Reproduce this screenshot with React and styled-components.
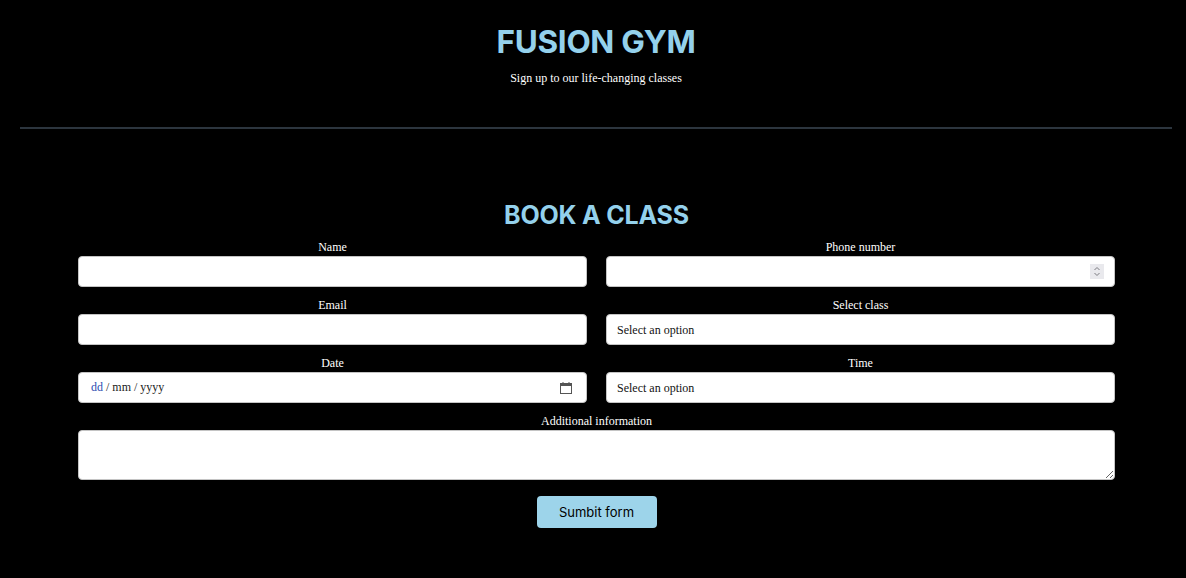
import styled, { createGlobalStyle } from 'styled-components';

const GlobalStyle = createGlobalStyle`
  body {
    margin: 0;
    background: #000;
    color: #fff;
    font-family: "Liberation Serif", "DejaVu Serif", serif;
  }
`;

const Page = styled.div`
  min-height: 578px;
  padding: 0 14px 0 20px;
`;

const Header = styled.header`
  display: flex;
  flex-direction: column;
  align-items: center;
  padding: 23px 0 41px;
  border-bottom: 2px solid #2c353e;
`;

const Title = styled.h1`
  margin: 0;
  font-family: Inter, "Liberation Sans", sans-serif;
  font-weight: 700;
  font-size: 31.5px;
  letter-spacing: -0.3px;
  line-height: 38px;
  color: #94d1ec;
`;

const Subtitle = styled.p`
  margin: 9px 0 0;
  font-size: 12px;
  line-height: 16px;
`;

const Section = styled.section`
  padding: 71px 57px 0 58px;
  display: flex;
  flex-direction: column;
  align-items: center;
`;

const SectionTitle = styled.h2`
  margin: 0;
  font-family: Inter, "Liberation Sans", sans-serif;
  font-weight: 700;
  font-size: 25px;
  letter-spacing: -0.2px;
  line-height: 30px;
  color: #94d1ec;
`;

const Form = styled.form`
  width: 100%;
  display: grid;
  grid-template-columns: 1fr 1fr;
  column-gap: 19px;
  row-gap: 10px;
  margin-top: 9px;
`;

const Field = styled.label`
  display: flex;
  flex-direction: column;
  align-items: stretch;
  grid-column: ${({ $wide }) => ($wide ? '1 / -1' : 'auto')};
`;

const Label = styled.span`
  text-align: center;
  font-size: 12px;
  line-height: 16px;
  margin-bottom: 1px;
`;

const controlStyle = `
  box-sizing: border-box;
  width: 100%;
  height: 31px;
  border: 1px solid #c4c4c4;
  border-radius: 4px;
  background: #fff;
  color: #111;
  padding: 0 10px;
  font-family: "Liberation Serif", "DejaVu Serif", serif;
  font-size: 12px;
  outline: none;
`;

const Input = styled.input`
  ${controlStyle}
`;

const Select = styled.select`
  ${controlStyle}
  appearance: none;
  -webkit-appearance: none;
`;

const Box = styled.div`
  ${controlStyle}
  display: flex;
  align-items: center;
  gap: 8px;
  padding: ${({ $pad }) => $pad || '0 10px'};
`;

const BareInput = styled.input`
  flex: 1;
  min-width: 0;
  height: 100%;
  border: none;
  outline: none;
  background: transparent;
  padding: 0;
  font: inherit;
  color: inherit;
  -moz-appearance: textfield;

  &::-webkit-inner-spin-button,
  &::-webkit-outer-spin-button {
    -webkit-appearance: none;
    margin: 0;
  }
`;

const DateText = styled.span`
  flex: 1;
  color: #222;
`;

const Segment = styled.span`
  color: ${({ $active }) => ($active ? '#2a4cb0' : '#222')};
`;

const TextArea = styled.textarea`
  ${controlStyle}
  height: 50px;
  padding: 6px 10px;
  resize: both;
`;

const Actions = styled.div`
  grid-column: 1 / -1;
  display: flex;
  justify-content: center;
  margin-top: 6px;
`;

const Button = styled.button`
  width: 120px;
  height: 32px;
  border: none;
  border-radius: 4px;
  background: #9dd4ea;
  color: #000;
  font-family: Inter, "Liberation Sans", sans-serif;
  font-size: 13px;
  cursor: pointer;
`;

const Spinner = () => (
  <svg width="14" height="15" viewBox="0 0 14 15">
    <rect width="14" height="15" fill="#e9e9ed" />
    <path d="M4.5 6 L7 3.5 L9.5 6" fill="none" stroke="#7a7a80" strokeWidth="1" />
    <path d="M4.5 9 L7 11.5 L9.5 9" fill="none" stroke="#7a7a80" strokeWidth="1" />
  </svg>
);

const CalendarIcon = () => (
  <svg width="12" height="12" viewBox="0 0 12 12">
    <rect x="0.5" y="1.5" width="11" height="10" fill="none" stroke="#555" strokeWidth="1" />
    <rect x="0.5" y="1.5" width="11" height="2.5" fill="#555" />
    <rect x="2.5" y="0" width="1" height="2" fill="#555" />
    <rect x="8.5" y="0" width="1" height="2" fill="#555" />
  </svg>
);

export default function App() {
  return (
    <>
      <GlobalStyle />
      <Page>
        <Header>
          <Title>FUSION GYM</Title>
          <Subtitle>Sign up to our life-changing classes</Subtitle>
        </Header>
        <Section>
          <SectionTitle>BOOK A CLASS</SectionTitle>
          <Form onSubmit={(e) => e.preventDefault()}>
            <Field>
              <Label>Name</Label>
              <Input type="text" />
            </Field>
            <Field>
              <Label>Phone number</Label>
              <Box $pad="0 10px 0 10px">
                <BareInput type="number" />
                <Spinner />
              </Box>
            </Field>
            <Field>
              <Label>Email</Label>
              <Input type="email" />
            </Field>
            <Field>
              <Label>Select class</Label>
              <Select defaultValue="">
                <option value="">Select an option</option>
                <option>Yoga</option>
                <option>Spinning</option>
                <option>HIIT</option>
              </Select>
            </Field>
            <Field>
              <Label>Date</Label>
              <Box $pad="0 14px 0 12px">
                <DateText>
                  <Segment $active>dd</Segment> / <Segment>mm</Segment> / <Segment>yyyy</Segment>
                </DateText>
                <CalendarIcon />
              </Box>
            </Field>
            <Field>
              <Label>Time</Label>
              <Select defaultValue="">
                <option value="">Select an option</option>
                <option>Morning</option>
                <option>Afternoon</option>
                <option>Evening</option>
              </Select>
            </Field>
            <Field $wide>
              <Label>Additional information</Label>
              <TextArea />
            </Field>
            <Actions>
              <Button type="submit">Sumbit form</Button>
            </Actions>
          </Form>
        </Section>
      </Page>
    </>
  );
}
